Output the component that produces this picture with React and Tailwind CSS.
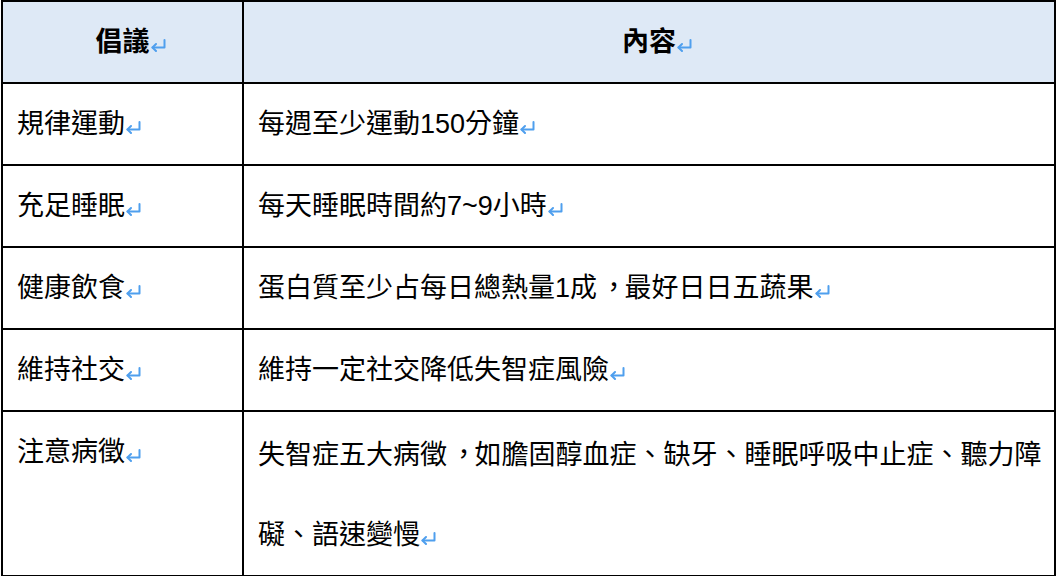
const Comma = () => (
  <span className="inline-block ml-[10px] mr-[4px] [font-feature-settings:'halt']">，</span>
);

const rows = [
  { tip: "規律運動", body: "每週至少運動150分鐘" },
  { tip: "充足睡眠", body: "每天睡眠時間約7~9小時" },
  {
    tip: "健康飲食",
    body: (
      <>
        蛋白質至少占每日總熱量1成<Comma />最好日日五蔬果
      </>
    ),
  },
  { tip: "維持社交", body: "維持一定社交降低失智症風險" },
];

// Word-style paragraph mark
function Mark({ hang }) {
  return (
    <svg
      width="17"
      height="13"
      viewBox="0 0 17 13"
      className={`inline-block align-[-1px] ${hang ? "mr-[-17px]" : ""}`}
      fill="none"
      stroke="#4f9fee"
      strokeWidth="2"
      strokeLinecap="round"
      strokeLinejoin="round"
    >
      <path d="M14.5 1 V8.5 H2.5" />
      <path d="M6 5 L2.5 8.5 L6 12" />
    </svg>
  );
}

export default function App() {
  return (
    <div
      lang="zh-TW"
      className="w-[1056px] h-[576px] bg-white text-black overflow-hidden"
      style={{ fontFamily: '"Liberation Sans", "Noto Sans CJK TC", sans-serif' }}
    >
      <table className="ml-px w-[1055px] border-collapse border-2 border-black text-[27px] leading-[80px] table-fixed">
        <colgroup>
          <col className="w-[241px]" />
          <col />
        </colgroup>
        <thead>
          <tr className="bg-[#dee9f6]">
            <th className="border-2 border-black font-bold text-center px-4">
              倡議
              <Mark hang />
            </th>
            <th className="border-2 border-black font-bold text-center px-4">
              內容
              <Mark hang />
            </th>
          </tr>
        </thead>
        <tbody>
          {rows.map((r) => (
            <tr key={r.tip}>
              <td className="border-2 border-black pl-[14px] pr-2 align-top">
                {r.tip}
                <Mark />
              </td>
              <td className="border-2 border-black pl-[14px] pr-2 align-top whitespace-nowrap">
                {r.body}
                <Mark />
              </td>
            </tr>
          ))}
          <tr>
            <td className="border-2 border-black pl-[14px] pr-2 align-top">
              注意病徵
              <Mark />
            </td>
            <td className="border-2 border-black pl-[14px] pr-2 pt-[3px] align-top whitespace-nowrap">
              失智症五大病徵<Comma />如膽固醇血症、缺牙、睡眠呼吸中止症、聽力障
              <br />
              礙、語速變慢
              <Mark />
            </td>
          </tr>
        </tbody>
      </table>
    </div>
  );
}
